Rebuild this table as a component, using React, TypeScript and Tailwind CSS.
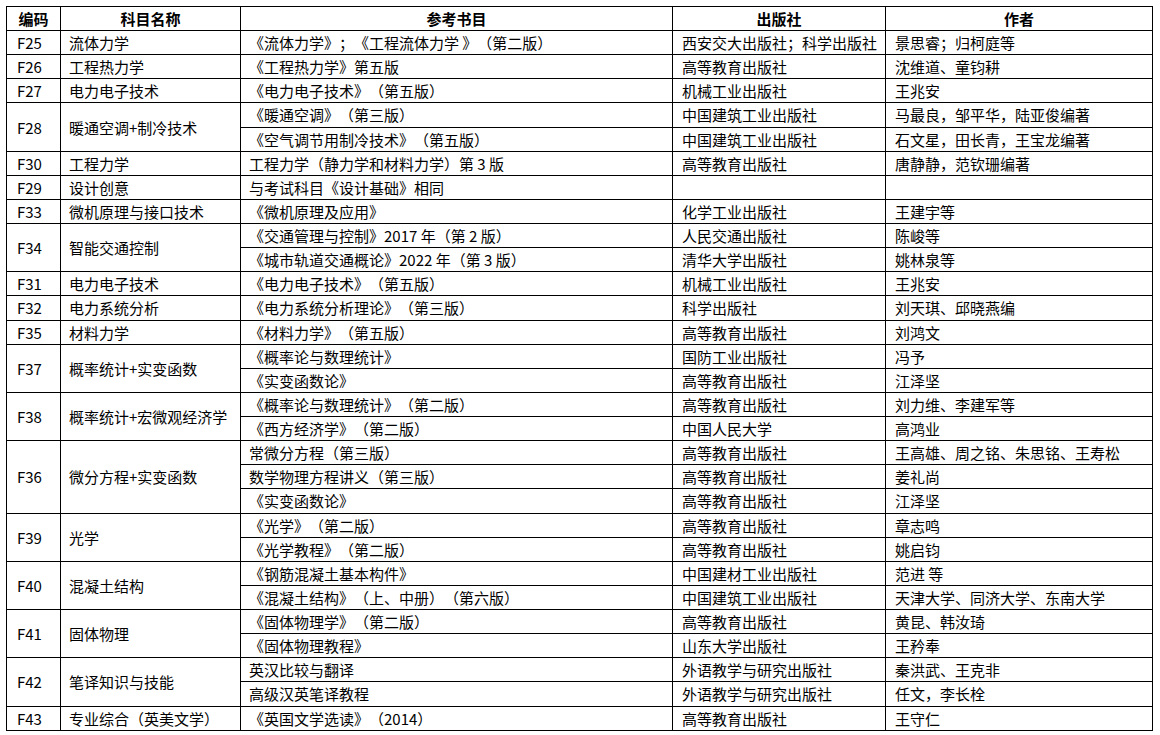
import React from "react";

type Book = [string, string, string];

const groups: { code: string; name: string; books: Book[] }[] = [
  { code: "F25", name: "流体力学", books: [["《流体力学》；《工程流体力学 》（第二版）", "西安交大出版社；科学出版社", "景思睿；归柯庭等"]] },
  { code: "F26", name: "工程热力学", books: [["《工程热力学》第五版", "高等教育出版社", "沈维道、童钧耕"]] },
  { code: "F27", name: "电力电子技术", books: [["《电力电子技术》（第五版）", "机械工业出版社", "王兆安"]] },
  {
    code: "F28",
    name: "暖通空调+制冷技术",
    books: [
      ["《暖通空调》（第三版）", "中国建筑工业出版社", "马最良，邹平华，陆亚俊编著"],
      ["《空气调节用制冷技术》（第五版）", "中国建筑工业出版社", "石文星，田长青，王宝龙编著"],
    ],
  },
  { code: "F30", name: "工程力学", books: [["工程力学（静力学和材料力学）第 3 版", "高等教育出版社", "唐静静，范钦珊编著"]] },
  { code: "F29", name: "设计创意", books: [["与考试科目《设计基础》相同", "", ""]] },
  { code: "F33", name: "微机原理与接口技术", books: [["《微机原理及应用》", "化学工业出版社", "王建宇等"]] },
  {
    code: "F34",
    name: "智能交通控制",
    books: [
      ["《交通管理与控制》2017 年（第 2 版）", "人民交通出版社", "陈峻等"],
      ["《城市轨道交通概论》2022 年（第 3 版）", "清华大学出版社", "姚林泉等"],
    ],
  },
  { code: "F31", name: "电力电子技术", books: [["《电力电子技术》（第五版）", "机械工业出版社", "王兆安"]] },
  { code: "F32", name: "电力系统分析", books: [["《电力系统分析理论》（第三版）", "科学出版社", "刘天琪、邱晓燕编"]] },
  { code: "F35", name: "材料力学", books: [["《材料力学》（第五版）", "高等教育出版社", "刘鸿文"]] },
  {
    code: "F37",
    name: "概率统计+实变函数",
    books: [
      ["《概率论与数理统计》", "国防工业出版社", "冯予"],
      ["《实变函数论》", "高等教育出版社", "江泽坚"],
    ],
  },
  {
    code: "F38",
    name: "概率统计+宏微观经济学",
    books: [
      ["《概率论与数理统计》（第二版）", "高等教育出版社", "刘力维、李建军等"],
      ["《西方经济学》（第二版）", "中国人民大学", "高鸿业"],
    ],
  },
  {
    code: "F36",
    name: "微分方程+实变函数",
    books: [
      ["常微分方程（第三版）", "高等教育出版社", "王高雄、周之铭、朱思铭、王寿松"],
      ["数学物理方程讲义（第三版）", "高等教育出版社", "姜礼尚"],
      ["《实变函数论》", "高等教育出版社", "江泽坚"],
    ],
  },
  {
    code: "F39",
    name: "光学",
    books: [
      ["《光学》（第二版）", "高等教育出版社", "章志鸣"],
      ["《光学教程》（第二版）", "高等教育出版社", "姚启钧"],
    ],
  },
  {
    code: "F40",
    name: "混凝土结构",
    books: [
      ["《钢筋混凝土基本构件》", "中国建材工业出版社", "范进 等"],
      ["《混凝土结构》（上、中册）（第六版）", "中国建筑工业出版社", "天津大学、同济大学、东南大学"],
    ],
  },
  {
    code: "F41",
    name: "固体物理",
    books: [
      ["《固体物理学》（第二版）", "高等教育出版社", "黄昆、韩汝琦"],
      ["《固体物理教程》", "山东大学出版社", "王矜奉"],
    ],
  },
  {
    code: "F42",
    name: "笔译知识与技能",
    books: [
      ["英汉比较与翻译", "外语教学与研究出版社", "秦洪武、王克非"],
      ["高级汉英笔译教程", "外语教学与研究出版社", "任文，李长栓"],
    ],
  },
  { code: "F43", name: "专业综合（英美文学）", books: [["《英国文学选读》（2014）", "高等教育出版社", "王守仁"]] },
];

const cell = "border border-black align-middle whitespace-nowrap leading-none p-0";

export default function App() {
  return (
    <div className="w-[1160px] h-[735px] bg-white pt-[6px] pl-[6px] text-black text-[15px] [text-spacing-trim:space-all] font-['Noto_Sans_CJK_SC',sans-serif]">
      <table className="table-fixed border-collapse w-[1146px]">
        <colgroup>
          <col className="w-[54px]" />
          <col className="w-[180px]" />
          <col className="w-[432px]" />
          <col className="w-[213px]" />
          <col className="w-[267px]" />
        </colgroup>
        <thead>
          <tr className="h-[24px] font-bold">
            <th className={`${cell} text-center`}>编码</th>
            <th className={`${cell} text-center`}>科目名称</th>
            <th className={`${cell} text-center`}>参考书目</th>
            <th className={`${cell} text-center`}>出版社</th>
            <th className={`${cell} text-center`}>作者</th>
          </tr>
        </thead>
        <tbody>
          {groups.map((g) =>
            g.books.map((b, i) => (
              <tr key={g.code + i} className="h-[24.14px]">
                {i === 0 && (
                  <>
                    <td rowSpan={g.books.length} className={`${cell} pl-[10px]`}>
                      {g.code}
                    </td>
                    <td rowSpan={g.books.length} className={`${cell} pl-[8px]`}>
                      {g.name}
                    </td>
                  </>
                )}
                <td className={`${cell} pl-[8px]`}>{b[0]}</td>
                <td className={`${cell} pl-[9px]`}>{b[1]}</td>
                <td className={`${cell} pl-[9px]`}>{b[2]}</td>
              </tr>
            ))
          )}
        </tbody>
      </table>
    </div>
  );
}
